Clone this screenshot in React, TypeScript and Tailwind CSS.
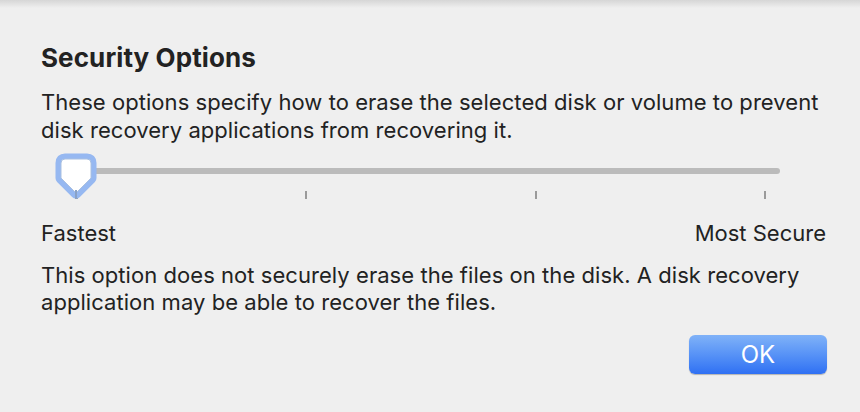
import React from "react";

const Tick = () => <div className="w-[2px] h-[8px] bg-[#9a9a9a]" />;

const THUMB = "M11 6 H33 Q37 6 37 10 V25 L22 40 L7 25 V10 Q7 6 11 6 Z";

export default function App() {
  return (
    <div
      className="relative w-[860px] h-[412px] bg-[#efefef] overflow-hidden text-[#222222]"
      style={{ fontFamily: "Inter, 'Noto Sans', sans-serif" }}
    >
      <div className="absolute top-0 left-0 right-0 h-[8px] bg-gradient-to-b from-[#d6d6d6] to-[#efefef]" />
      <div className="flex flex-col pl-[41px] pr-[34px] pt-[43px]">
        <h1 className="text-[26px] font-bold leading-[30px] tracking-[0.1px]">Security Options</h1>
        <p className="mt-[15px] text-[22px] leading-[28px] tracking-[0.05px]">
          These options specify how to erase the selected disk or volume to prevent
          <br />
          disk recovery applications from recovering it.
        </p>
        <div className="relative flex flex-col">
          <div className="ml-[35px] mr-[46px] mt-[24px] h-[6px] rounded-full bg-[#bbbbbb]" />
          <div className="flex justify-between ml-[35px] w-[690px] mt-[17px]">
            <Tick />
            <Tick />
            <Tick />
            <Tick />
          </div>
          <svg className="absolute left-[13px] top-[9px]" width="46" height="50" viewBox="0 0 46 50">
            <path d={THUMB} fill="#ffffff" stroke="#96b8f1" strokeWidth="11" strokeLinejoin="round" />
            <path d={THUMB} fill="#ffffff" stroke="#aac0e0" strokeWidth="1" strokeLinejoin="round" />
            <rect x="21" y="37" width="2" height="9" fill="#8aa2c6" />
          </svg>
        </div>
        <div className="flex justify-between mt-[20px] text-[22px] leading-[28px]">
          <span>Fastest</span>
          <span>Most Secure</span>
        </div>
        <p className="mt-[15px] text-[22px] leading-[27px] tracking-[0.05px]">
          This option does not securely erase the files on the disk. A disk recovery
          <br />
          application may be able to recover the files.
        </p>
        <div className="flex justify-end mt-[19px]">
          <button className="w-[138px] h-[39px] mr-[-1px] rounded-[6px] bg-gradient-to-b from-[#80b2f8] to-[#2f70f3] text-white text-[24px] leading-none shadow-[0_1px_1px_rgba(0,0,0,0.25)]">
            OK
          </button>
        </div>
      </div>
    </div>
  );
}
